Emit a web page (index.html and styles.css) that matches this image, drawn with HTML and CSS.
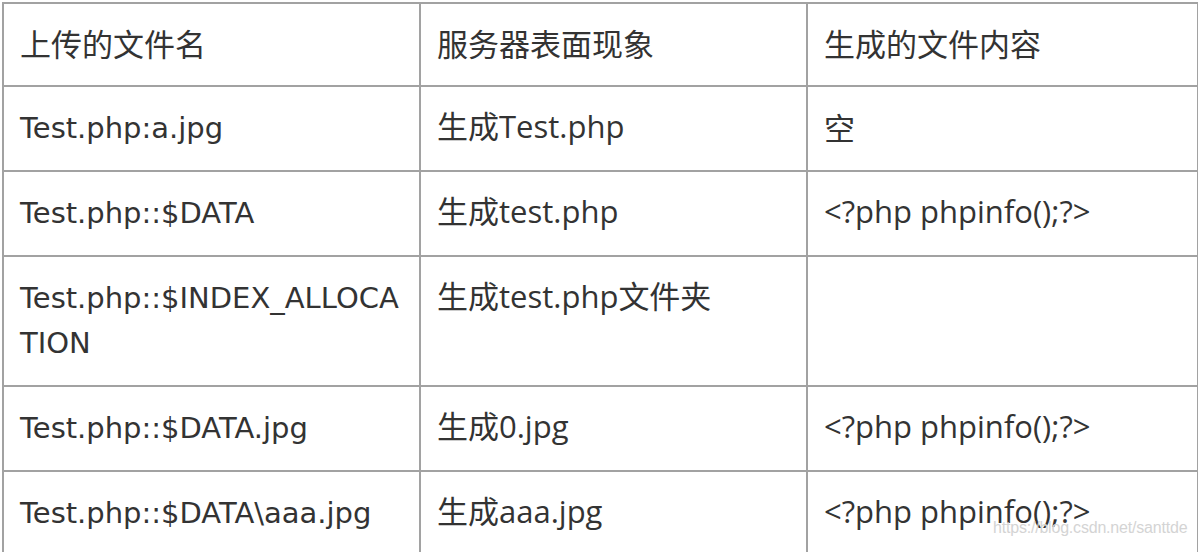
FILE: index.html
```html
<!DOCTYPE html>
<html lang="zh-CN">
<head>
<meta charset="utf-8">
<title>文件流测试</title>
<link rel="stylesheet" href="styles.css">
</head>
<body>
<div class="page">
  <table class="grid">
    <colgroup>
      <col class="c1">
      <col class="c2">
      <col class="c3">
    </colgroup>
    <tr class="head">
      <td class="cjk">上传的文件名</td>
      <td class="cjk">服务器表面现象</td>
      <td class="cjk">生成的文件内容</td>
    </tr>
    <tr>
      <td class="name">Test.php:a.jpg</td>
      <td class="mixed"><span class="cjk">生成</span>Test.php</td>
      <td class="cjk">空</td>
    </tr>
    <tr>
      <td class="name">Test.php::$DATA</td>
      <td class="mixed"><span class="cjk">生成</span>test.php</td>
      <td class="mixed">&lt;?php phpinfo();?&gt;</td>
    </tr>
    <tr>
      <td class="name">Test.php::$INDEX_ALLOCA<br>TION</td>
      <td class="mixed"><span class="cjk">生成</span>test.php<span class="cjk">文件夹</span></td>
      <td class="mixed"></td>
    </tr>
    <tr>
      <td class="name">Test.php::$DATA.jpg</td>
      <td class="mixed"><span class="cjk">生成</span>0.jpg</td>
      <td class="mixed">&lt;?php phpinfo();?&gt;</td>
    </tr>
    <tr>
      <td class="name">Test.php::$DATA\aaa.jpg</td>
      <td class="mixed"><span class="cjk">生成</span>aaa.jpg</td>
      <td class="mixed">&lt;?php phpinfo();?&gt;</td>
    </tr>
  </table>
  <div class="watermark">https://blog.csdn.net/santtde</div>
</div>
</body>
</html>
```

FILE: styles.css
```css
html, body {
  margin: 0;
  padding: 0;
  background: #ffffff;
}

.page {
  position: relative;
  width: 1198px;
  height: 552px;
  overflow: hidden;
  padding: 2px 0 0 2px;
  box-sizing: border-box;
}

.grid {
  border-collapse: collapse;
  table-layout: fixed;
  width: 1195px;
  color: #333333;
}

.c1 { width: 417px; }
.c2 { width: 387px; }
.c3 { width: 391px; }

.grid td {
  border: 2px solid #a2a2a2;
  padding: 17px 16px 21px 16px;
  height: 45px;
  line-height: 45px;
  vertical-align: top;
  font-family: "Open Sans", "Noto Sans CJK SC", sans-serif;
  font-size: 31px;
}

.grid td.cjk {
  font-family: "Noto Sans CJK SC", "Noto Sans", sans-serif;
  font-size: 31px;
  line-height: 45px;
}

.grid .head td.cjk {
  padding-top: 16px;
  padding-bottom: 20px;
}

.mixed .cjk {
  font-family: "Noto Sans CJK SC", "Noto Sans", sans-serif;
  font-size: 31px;
  line-height: 1;
}

.grid td.name {
  font-family: "DejaVu Sans", "Noto Sans CJK SC", sans-serif;
  font-size: 29px;
  padding-top: 19px;
  padding-bottom: 19px;
  white-space: nowrap;
}

.watermark {
  position: absolute;
  left: 993px;
  top: 518px;
  line-height: 20px;
  font-family: "Liberation Sans", Arial, sans-serif;
  font-size: 16px;
  letter-spacing: -0.2px;
  color: #d4d4d4;
}
```
